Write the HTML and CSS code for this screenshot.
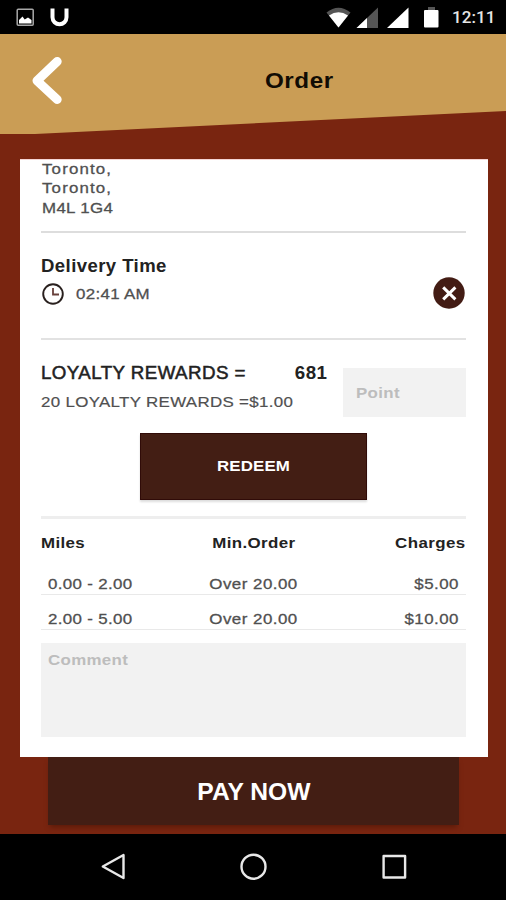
FILE: index.html
```html
<!DOCTYPE html>
<html lang="en">
<head>
<meta charset="utf-8">
<title>Order</title>
<link rel="stylesheet" href="styles.css">
</head>
<body>
<div class="status">
  <svg class="status-left" width="80" height="34" viewBox="0 0 80 34">
    <rect x="17.2" y="9.2" width="16" height="16" rx="1" fill="none" stroke="#a8a8a8" stroke-width="1.5"/>
    <path d="M19 23.500V20l3.500-3.500 2.200 3 3.300-2 3.500 2.500v3.500z" fill="#fff"/>
    <path d="M52.500 8.500v8.800a7 7 0 0 0 14 0V8.500" fill="none" stroke="#fff" stroke-width="4"/>
  </svg>
  <svg class="status-icons" width="122" height="34" viewBox="320 0 122 34">
    <path d="M326.500 12.500Q338.500 3 350.500 12.500L338.500 27.500z" fill="#555"/>
    <path d="M329 15.500Q338.500 9 348 15.500L338.500 27.500z" fill="#fff"/>
    <path d="M378 7.500V28H356.500z" fill="#555"/>
    <path d="M367 18V28H356.500z" fill="#fff"/>
    <path d="M408.500 7.500V28H387z" fill="#fff"/>
    <path d="M428 7h7v3h-7z" fill="#555"/>
    <rect x="424" y="10" width="14.500" height="17.500" rx="1" fill="#fff"/>
  </svg>
  <span class="clock">12:11</span>
</div>
<header class="header">
  <svg class="back" width="40" height="60" viewBox="27 50 40 60"><path d="M57.200 61.500L37 80.700 57.200 99.500" fill="none" stroke="#fff" stroke-width="9" stroke-linecap="round" stroke-linejoin="round"/></svg>
  <h1 class="title">Order</h1>
</header>
<main class="screen">
  <section class="card">
    <div class="address">
      <div class="wide town">Toronto,</div>
      <div class="wide town">Toronto,</div>
      <div class="wide postal">M4L 1G4</div>
    </div>
    <div class="delivery">
      <div>
        <h2 class="heading">Delivery Time</h2>
        <div class="time-row">
          <svg width="24" height="24" viewBox="0 0 24 24"><circle cx="12" cy="12" r="9.800" fill="none" stroke="#29201e" stroke-width="1.900"/><path d="M12 6v6.500h6" fill="none" stroke="#68403b" stroke-width="1.800"/></svg>
          <span class="wide time">02:41 AM</span>
        </div>
      </div>
      <svg class="clear" width="32" height="32" viewBox="0 0 32 32"><circle cx="16" cy="16" r="15.700" fill="#431c14"/><path d="M10.200 10.400l12.200 12M22.400 10.400l-12.200 12" stroke="#fff" stroke-width="3"/></svg>
    </div>
    <div class="loyalty">
      <div class="loyalty-top">
        <div class="loyalty-text">
          <div class="loyalty-line"><span>LOYALTY REWARDS =</span><b>681</b></div>
          <div class="wide rate">20 LOYALTY REWARDS =$1.00</div>
        </div>
        <div class="point"><div class="wide">Point</div></div>
      </div>
      <div class="redeem"><div class="wide">REDEEM</div></div>
    </div>
    <div class="rates head"><span class="wide">Miles</span><span class="wide min">Min.Order</span><span class="wide charges">Charges</span></div>
    <div class="rates row"><span class="wide">0.00 - 2.00</span><span class="wide over">Over 20.00</span><span class="wide">$5.00</span></div>
    <div class="rates row"><span class="wide">2.00 - 5.00</span><span class="wide over">Over 20.00</span><span class="wide">$10.00</span></div>
    <div class="comment"><div class="wide">Comment</div></div>
  </section>
  <div class="pay"><span>PAY NOW</span></div>
</main>
<nav class="nav">
  <svg width="506" height="66" viewBox="0 834 506 66" fill="none" stroke="#e8e8e8" stroke-width="2.400" stroke-linejoin="round">
    <path d="M123.500 855v23L102.800 866.500z"/>
    <circle cx="253.500" cy="866.700" r="12"/>
    <rect x="383.600" y="856" width="21.500" height="21.500"/>
  </svg>
</nav>
</body>
</html>
```
FILE: styles.css
```css
* { box-sizing: border-box; }
body {
  margin: 0;
  width: 506px;
  height: 900px;
  overflow: hidden;
  display: flex;
  flex-direction: column;
  background: #792510;
  font-family: "Liberation Sans", Arial, sans-serif;
  font-size: 15.500px;
  color: #505050;
}
h1, h2 { margin: 0; }
svg { display: block; flex: none; }
.wide {
  transform: scaleX(1.09);
  transform-origin: left;
  letter-spacing: 0.3px;
}
.status {
  height: 34px;
  flex: none;
  display: flex;
  background: #000;
}
.status-icons { margin-left: auto; }
.clock {
  width: 64px;
  padding-left: 10px;
  font: 500 17px/35px Roboto, sans-serif;
  letter-spacing: 0.1px;
  color: #e6e6e6;
}
.header {
  height: 100px;
  flex: none;
  display: flex;
  padding: 16px 0 0 27px;
  background: #ca9d55;
  clip-path: polygon(0 0, 100% 0, 100% 77px, 35px 100%, 0 100%);
}
.title {
  margin-left: 198px;
  font-size: 22px;
  line-height: 61px;
  letter-spacing: 0.5px;
  transform: scaleX(1.1);
  transform-origin: left;
  color: #110c04;
}
.screen {
  flex: 1;
  padding-top: 25px;
  display: flex;
  flex-direction: column;
}
.card {
  height: 598px;
  margin: 0 18px 0 20px;
  padding: 0 22px 0 21px;
  background: #fff;
  border-top: 1px solid #f5d5d5;
  flex: none;
}
.address {
  height: 73px;
  border-bottom: 2px solid #ddd;
  line-height: 19.500px;
  -webkit-text-stroke: 0.3px #505050;
}
.address > div { position: relative; top: -1.500px; left: 0.500px; }
.town { letter-spacing: 1.050px; }
.postal { letter-spacing: 0.3px; }
.delivery {
  height: 107px;
  border-bottom: 2px solid #e2e2e2;
  display: flex;
  justify-content: space-between;
  padding-top: 21px;
}
.heading {
  font-size: 17.500px;
  line-height: 24px;
  letter-spacing: 0.4px;
  transform: scaleX(1.06);
  transform-origin: left;
  color: #222;
}
.time-row {
  display: flex;
  align-items: center;
  gap: 11px;
  height: 31px;
}
.time { -webkit-text-stroke: 0.3px #505050; }
.clear { margin: 23px 1px 0 0; }
.loyalty {
  height: 179px;
  padding-top: 28px;
  border-bottom: 3px solid #eee;
}
.loyalty-top { display: flex; justify-content: space-between; }
.loyalty-text { width: 286px; margin-top: -7px; height: 56px; }
.loyalty-line {
  display: flex;
  justify-content: space-between;
  font-size: 17.500px;
  line-height: 25px;
  letter-spacing: 0.4px;
  color: #222;
  -webkit-text-stroke: 0.5px #222;
}
.loyalty-line span { transform: scaleX(1.07); transform-origin: left; }
.loyalty-line b { -webkit-text-stroke: 0; transform: scaleX(1.07); transform-origin: right; }
.rate {
  line-height: 31px;
  -webkit-text-stroke: 0.2px #505050;
}
.point {
  width: 123px;
  height: 49px;
  padding-left: 13px;
  line-height: 50px;
  font-weight: bold;
  background: #f2f2f2;
  color: #bdbdbd;
}
.redeem {
  width: 227px;
  height: 67px;
  margin: 16px 0 0 99px;
  background: #431e14;
  border: 1px solid #300b08;
  box-shadow: 0 2px 2px #ddd;
  color: #fff;
  font-weight: bold;
  line-height: 64px;
  text-align: center;
}
.redeem .wide { transform-origin: center; letter-spacing: 0.1px; }
.rates {
  display: grid;
  grid-template-columns: 1fr 1fr 1fr;
}
.rates > :nth-child(2) { text-align: center; transform-origin: center; }
.rates > :nth-child(3) { text-align: right; transform-origin: right; }
.head {
  height: 41px;
  line-height: 48px;
  font-weight: bold;
  color: #222;
}
.min { letter-spacing: 0.35px; }
.charges { letter-spacing: 0.4px; }
.row {
  height: 35px;
  padding: 0 7px;
  line-height: 48px;
  border-bottom: 1px solid #e9e9e9;
  -webkit-text-stroke: 0.3px #505050;
}
.over { letter-spacing: 0.450px; }
.row > :nth-child(3) { letter-spacing: 0.45px; }
.comment {
  height: 94px;
  margin-top: 13px;
  padding-left: 7px;
  line-height: 34px;
  font-weight: bold;
  background: #f2f2f2;
  color: #bdbdbd;
}
.pay {
  width: 411px;
  height: 68px;
  margin-left: 48px;
  background: #431e14;
  box-shadow: 0 4px 5px -2px rgba(60, 15, 0, 0.5);
  color: #fff;
  font-size: 23px;
  font-weight: bold;
  line-height: 70px;
  text-align: center;
  flex: none;
}
.pay span { display: inline-block; transform: scaleX(1.07); }
.nav { height: 66px; flex: none; background: #000; }
```
